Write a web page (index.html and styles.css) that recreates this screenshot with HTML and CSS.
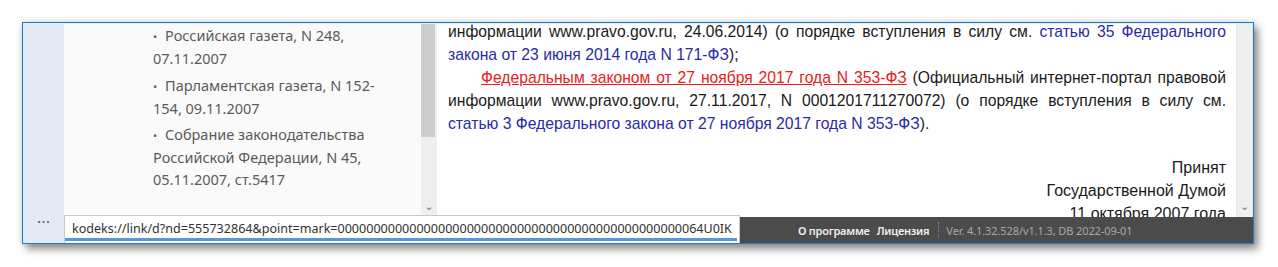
FILE: index.html
```html
<!DOCTYPE html>
<html lang="ru">
<head>
<meta charset="utf-8">
<link rel="stylesheet" href="styles.css">
</head>
<body>
<div class="window">
  <aside class="rail">
    <span class="dots">•••</span>
  </aside>
  <div class="main">
    <div class="panes">
      <section class="left">
        <div class="left-content">
          <ul class="sources">
            <li><span class="bul">•</span>Российская газета, N 248, 07.11.2007</li>
            <li><span class="bul">•</span>Парламентская газета, N 152-154, 09.11.2007</li>
            <li><span class="bul">•</span>Собрание законодательства Российской Федерации, N 45, 05.11.2007, ст.5417</li>
          </ul>
        </div>
        <div class="vscroll">
          <div class="thumb"></div>
          <span class="arrow">&#8964;</span>
        </div>
      </section>
      <section class="doc">
        <div class="doc-content">
          <p class="just">информации www.pravo.gov.ru, 24.06.2014) (о порядке вступления в силу см. <a class="ref">статью 35 Федерального закона от 23 июня 2014 года N 171-ФЗ</a>);</p>
          <p class="just indent"><a class="red">Федеральным законом от 27 ноября 2017 года N 353-ФЗ</a> (Официальный интернет-портал правовой информации www.pravo.gov.ru, 27.11.2017, N 0001201711270072) (о порядке вступления в силу см. <a class="ref">статью 3 Федерального закона от 27 ноября 2017 года N 353-ФЗ</a>).</p>
          <p class="sign">Принят<br>Государственной Думой<br>11 октября 2007 года</p>
        </div>
        <div class="vscroll wide">
          <span class="arrow">&#8964;</span>
        </div>
      </section>
    </div>
    <footer class="status">
      <span class="st-link">О программе</span>
      <span class="st-link">Лицензия</span>
      <span class="st-sep"></span>
      <span class="st-ver">Ver. 4.1.32.528/v1.1.3, DB 2022-09-01</span>
    </footer>
    <div class="tip">kodeks://link/d?nd=555732864&amp;point=mark=000000000000000000000000000000000000000000000000064U0IK</div>
  </div>
</div>
</body>
</html>
```
FILE: styles.css
```css
html, body {
  margin: 0;
  padding: 0;
  background: #ffffff;
}
body {
  padding: 22px 0 0 22px;
  height: 267px;
  box-sizing: border-box;
  overflow: hidden;
}
.window {
  width: 1232px;
  height: 222px;
  box-sizing: border-box;
  border: 1px solid #1580cc;
  display: flex;
  background: #fff;
  box-shadow: 4px 5px 8px rgba(0,0,0,0.45), 0 -1px 6px rgba(0,0,0,0.12);
}
.rail {
  width: 41px;
  flex: none;
  background: #e3eaf3;
  display: flex;
  flex-direction: column;
  justify-content: flex-end;
  align-items: center;
}
.dots {
  font-family: "Liberation Sans", sans-serif;
  font-size: 7px;
  letter-spacing: 2px;
  margin-left: 2px;
  color: #555;
  margin-bottom: 18px;
}
.main {
  flex: 1;
  display: flex;
  flex-direction: column;
  position: relative;
  min-width: 0;
}
.panes {
  flex: 1;
  display: flex;
  min-height: 0;
  border-top: 1px solid #e9e9e9;
}
.left {
  width: 373px;
  flex: none;
  display: flex;
  background: #fafafa;
}
.left-content {
  flex: 1;
  overflow: hidden;
  padding-left: 89px;
}
.sources {
  list-style: none;
  margin: 0;
  padding: 0;
  width: 226px;
  font-family: "Noto Sans", sans-serif;
  font-size: 14.5px;
  line-height: 22.7px;
  color: #5a5a5a;
}
.sources li {
  margin-bottom: 5px;
}
.sources li:nth-child(2) {
  margin-bottom: 3px;
}
.bul {
  display: inline-block;
  width: 12px;
  font-size: 11px;
  line-height: 1;
}
.vscroll {
  width: 16px;
  flex: none;
  background: #efefef;
  position: relative;
  display: flex;
  flex-direction: column;
  justify-content: flex-end;
  align-items: center;
}
.vscroll.wide {
  width: 15px;
  border-left: 1px solid #e6e6e6;
  border-right: 1px solid #e0e0e0;
}
.thumb {
  position: absolute;
  top: 0;
  left: 0;
  width: 14px;
  height: 113px;
  background: #cdcdcd;
}
.arrow {
  font-family: "DejaVu Sans", sans-serif;
  font-size: 11px;
  line-height: 10px;
  color: #777;
  margin-bottom: 5px;
}
.doc {
  flex: 1;
  display: flex;
  min-width: 0;
}
.doc-content {
  flex: 1;
  overflow: hidden;
  padding: 0 10px 0 11px;
  font-family: "Liberation Sans", Arial, sans-serif;
  font-size: 15.7px;
  line-height: 23px;
  color: #1a1a1a;
}
.doc-content p {
  margin: 0;
}
.doc-content p:first-child {
  margin-top: -4px;
}
.just {
  text-align: justify;
}
.indent {
  text-indent: 33px;
}
.ref {
  color: #2a2aa8;
}
.red {
  color: #e8201c;
  text-decoration: underline;
}
.sign {
  text-align: right;
  font-size: 16px;
  margin-top: 21px !important;
}
.status {
  height: 26px;
  flex: none;
  background: #4b4b4b;
  display: flex;
  align-items: center;
  padding-left: 734px;
  font-family: "Noto Sans", sans-serif;
  font-size: 11px;
}
.st-link {
  color: #f0f0f0;
  font-weight: 600;
  letter-spacing: -0.25px;
  margin-right: 7px;
}
.st-sep {
  width: 0;
  height: 16px;
  border-left: 1px dotted #888;
  margin: 0 7px 0 2px;
}
.st-ver {
  color: #a8a8a8;
  letter-spacing: -0.1px;
}
.tip {
  position: absolute;
  left: 0;
  bottom: 0;
  width: 676px;
  height: 28px;
  box-sizing: border-box;
  background: #fff;
  border: 1px solid #c9c9c9;
  border-bottom: none;
  padding: 4px 0 0 7px;
  font-family: "Noto Sans", sans-serif;
  font-size: 12.55px;
  color: #333;
  white-space: nowrap;
}
.tip::after {
  content: "";
  position: absolute;
  left: 0;
  right: 2px;
  bottom: 2px;
  height: 3px;
  background: #5e93d8;
}
```
